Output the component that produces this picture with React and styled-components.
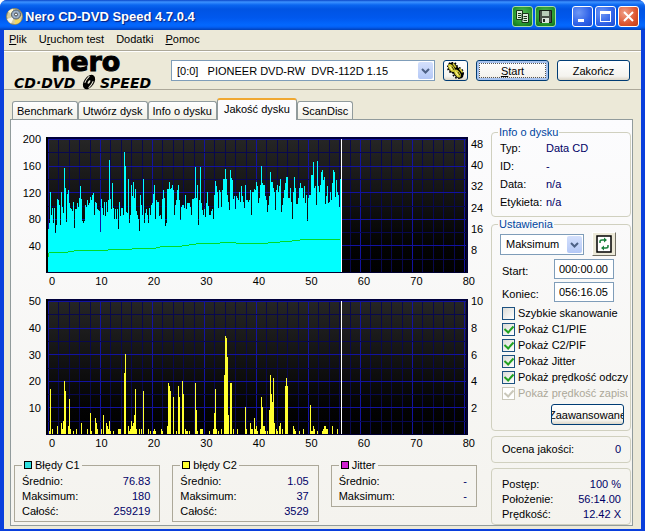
import React from "react";
import styled, { createGlobalStyle, css } from "styled-components";

const GlobalStyle = createGlobalStyle`
  * {
    box-sizing: border-box;
  }
  body {
    margin: 0;
    background: #fff;
    color: #000;
    font-family: "Liberation Sans", Arial, sans-serif;
    font-size: 11px;
    line-height: 12px;
  }
  button, input, select {
    font: inherit;
    color: inherit;
    margin: 0;
  }
  u {
    text-underline-offset: 1px;
  }
`;

const Window = styled.div`
  display: flex;
  flex-direction: column;
  min-height: 100vh;
  background: #0a3fdc;
  border-radius: 7px 7px 0 0;
  overflow: hidden;
`;

const TitleBar = styled.header`
  display: flex;
  align-items: center;
  gap: 2px;
  height: 30px;
  padding: 2px 6px 0 6px;
  background: linear-gradient(
    #0a46c8 0,
    #3c92ff 2px,
    #0a66f0 5px,
    #0054e3 9px,
    #0058ee 18px,
    #0368fe 25px,
    #0360f5 27px,
    #0140b8 30px
  );
`;

const Title = styled.h1`
  flex: 1;
  margin: 0;
  padding-top: 2px;
  color: #fff;
  font-size: 13px;
  font-weight: bold;
  text-shadow: 1px 1px 1px #0a1e78;
`;

const tones = {
  blue: "radial-gradient(circle at 30% 30%, #6f98f5, #2f62e8 60%, #1c4bd0)",
  red: "radial-gradient(circle at 30% 30%, #f0a088, #dd5530 60%, #c03c14)",
  green: "radial-gradient(circle at 50% 40%, #5cc05c, #24952c 65%, #107018)",
};

const TitleButton = styled.button`
  display: flex;
  align-items: center;
  justify-content: center;
  width: 21px;
  height: 21px;
  padding: 0;
  border: 1px solid ${props => (props.$tone === "green" ? "#a8dca8" : "#fff")};
  border-radius: 3px;
  background: ${props => tones[props.$tone]};
  margin-left: ${props => (props.$apart ? "14px" : "0")};
`;

const Body = styled.div`
  flex: 1;
  display: flex;
  flex-direction: column;
  margin: 0 4px 4px;
  background: #ece9d8;
`;

const MenuBar = styled.nav`
  display: flex;
  gap: 12px;
  height: 21px;
  padding: 3px 5px 0;
  border-bottom: 1px solid #aca899;
`;

const MenuLink = styled.a`
  color: #000;
  text-decoration: none;
`;

const Toolbar = styled.div`
  display: flex;
  align-items: center;
  gap: 8px;
  height: 39px;
  padding: 0 11px 0 9px;
  border-top: 1px solid #fff;
  border-bottom: 1px solid #aca899;
`;

const Logo = styled.svg`
  flex: none;
  width: 150px;
  height: 36px;
  overflow: visible;
`;

const ComboBox = styled.div`
  position: relative;
  flex: ${props => (props.$wide ? "1" : "none")};
  width: ${props => (props.$wide ? "auto" : "84px")};
  height: 21px;
`;

const Select = styled.select`
  appearance: none;
  width: 100%;
  height: 100%;
  padding: 0 20px 0 5px;
  border: 1px solid #7f9db9;
  border-radius: 0;
  background: #fff;
`;

const ComboArrow = styled.svg`
  position: absolute;
  top: 2px;
  right: 2px;
  width: 15px;
  height: 17px;
  border-radius: 2px;
  background: linear-gradient(#d4e0fc, #b4c8f6);
  pointer-events: none;
`;

const Button = styled.button`
  display: flex;
  align-items: center;
  justify-content: center;
  flex: none;
  width: ${props => (props.$icon ? "25px" : "73px")};
  height: 21px;
  padding: 0;
  overflow: hidden;
  border: 1px solid #003c74;
  border-radius: 3px;
  background: linear-gradient(#fff, #f4f3ee 80%, #dcd6c8);
  ${props =>
    props.$primary &&
    css`
      box-shadow: inset 0 0 0 2px #a6c2ee;
      outline: 1px dotted #555;
      outline-offset: -4px;
    `}
`;

const Tabs = styled.div`
  display: flex;
  align-items: flex-end;
  height: 29px;
  padding: 0 8px;
`;

const Tab = styled.button`
  height: ${props => (props.$active ? "22px" : "18px")};
  padding: 0 ${props => (props.$active ? "6px" : "4px")};
  border: 1px solid #919b9c;
  border-bottom: 0;
  border-radius: 3px 3px 0 0;
  background: linear-gradient(#fff, #f0efe6);
  ${props =>
    props.$active &&
    css`
      position: relative;
      margin-bottom: -1px;
      padding-bottom: 2px;
      border-top: 2px solid #f0a830;
      background: #fcfcfe;
    `}
`;

const Panel = styled.main`
  flex: 1;
  display: grid;
  grid-template-columns: 1fr 140px;
  gap: 5px;
  margin: 0 8px 3px 6px;
  padding-right: 1px;
  border: 1px solid #919b9c;
  background: linear-gradient(#fcfcfe, #f4f3ee);
`;

const Results = styled.section`
  display: flex;
  flex-direction: column;
  gap: 8px;
  min-width: 0;
  padding-top: 13px;
`;

const Sidebar = styled.aside`
  min-width: 0;
  padding-top: 6px;
`;

const Chart = styled.div`
  display: grid;
  grid-template-columns: 35px 1fr 18px;
`;

const Plot = styled.svg`
  display: block;
  width: 100%;
  height: 136px;
  margin-top: 4px;
`;

const Scale = styled.div`
  display: flex;
  flex-direction: column;
  justify-content: space-between;
  padding: ${props => (props.$inset ? "5px 0 17px 3px" : "0 0 21px 3px")};
  ${props =>
    props.$left &&
    css`
      padding: 0 5px 21px 0;
      text-align: right;
    `}
`;

const TimeScale = styled.div`
  grid-column: 2 / 4;
  display: flex;
  justify-content: space-between;
  padding: 2px 11px 0 3px;
`;

const Summaries = styled.div`
  display: grid;
  grid-template-columns: repeat(3, 1fr);
  align-items: start;
  gap: 12px;
  margin-top: 2px;
  padding: 0 9px 0 3px;
`;

const Summary = styled.fieldset`
  min-width: 0;
  margin: 0;
  padding: 3px 9px 2px 7px;
  border: 1px solid #aca899;
`;

const SummaryTitle = styled.legend`
  display: flex;
  align-items: center;
  gap: 3px;
  padding: 0 2px;
`;

const Swatch = styled.span`
  width: 8px;
  height: 8px;
  border: 1px solid #000;
  background: ${props => props.$color};
`;

const Facts = styled.dl`
  margin: 0;
`;

const Fact = styled.div`
  display: flex;
  justify-content: space-between;
  line-height: 15px;
`;

const Value = styled.dd`
  margin: 0;
  color: #000066;
`;

const Group = styled.fieldset`
  min-width: 0;
  margin: 0 0 1px;
  padding: 1px 2px 5px 8px;
  border: 1px solid #d0d0bf;
  border-radius: 4px;
`;

const GroupTitle = styled.legend`
  padding: 0 1px;
  margin-left: -2px;
  color: #0046a0;
`;

const InfoRow = styled.div`
  display: grid;
  grid-template-columns: 46px 1fr;
  line-height: 18px;
`;

const StatusBox = styled.div`
  margin-top: 5px;
  padding: ${props => (props.$tall ? "8px 9px 2px 10px" : "5px 9px 5px 10px")};
  border: 1px solid #d0d0bf;
  border-radius: 4px;
`;

const SpeedRow = styled.div`
  display: flex;
  align-items: center;
  gap: 8px;
  margin: 1px 0 3px;
`;

const RefreshButton = styled.button`
  width: 24px;
  height: 24px;
  padding: 0;
  border: 1px solid;
  border-color: #fff #716f64 #716f64 #fff;
  background: #ece9d8;
  svg {
    display: block;
    margin: auto;
  }
`;

const TimeRow = styled.div`
  display: grid;
  grid-template-columns: 52px 60px;
  align-items: center;
  margin-bottom: 3px;
  padding-left: 2px;
  label {
    padding-top: 3px;
  }
`;

const TimeInput = styled.input`
  width: 100%;
  height: 20px;
  padding: 0 4px;
  border: 1px solid #7f9db9;
  background: #fff;
`;

const CheckList = styled.div`
  overflow: hidden;
  margin-bottom: 3px;
  padding-left: 2px;
`;

const CheckLabel = styled.label`
  display: flex;
  align-items: center;
  gap: 3px;
  height: 16px;
  white-space: nowrap;
  color: ${props => (props.$disabled ? "#aca899" : "#000")};
`;

const CheckInput = styled.input`
  appearance: none;
  display: grid;
  place-items: center;
  flex: none;
  width: 13px;
  height: 13px;
  border: 1px solid #1c5180;
  background: linear-gradient(135deg, #dcdcd7, #fff);
  &:checked::after {
    content: "";
    width: 4px;
    height: 7px;
    margin-top: -2px;
    border: solid #21a121;
    border-width: 0 2px 2px 0;
    transform: rotate(42deg);
  }
  &:disabled {
    border-color: #cac8bb;
    background: #fff;
  }
  &:disabled::after {
    border-color: #cac8bb;
  }
`;

const ButtonRow = styled.div`
  display: flex;
  justify-content: flex-end;
  padding-right: 4px;
`;

// C1 errors, one sample per column
const c1 = [
  64, 73, 121, 85, 96, 73, 96, 59, 70, 110, 109, 100, 70, 120, 98, 88, 156, 126,
  75, 118, 123, 104, 96, 95, 91, 105, 66, 94, 95, 104, 98, 111, 129, 110, 77,
  74, 77, 101, 98, 109, 101, 104, 113, 109, 116, 119, 86, 105, 104, 95, 93, 91,
  60, 110, 96, 86, 106, 84, 106, 90, 109, 168, 110, 95, 134, 96, 79, 95, 80, 95,
  64, 106, 84, 96, 96, 86, 180, 159, 90, 88, 140, 74, 86, 131, 114, 135, 111,
  125, 91, 86, 79, 61, 116, 101, 86, 140, 73, 89, 94, 86, 73, 96, 86, 100, 104,
  118, 131, 79, 109, 106, 106, 84, 85, 79, 110, 123, 111, 69, 74, 125, 125, 135,
  125, 126, 131, 124, 86, 101, 109, 124, 131, 109, 78, 98, 100, 100, 96, 116,
  95, 104, 104, 104, 98, 86, 110, 110, 111, 158, 111, 131, 71, 109, 158, 104,
  93, 86, 94, 83, 104, 121, 99, 85, 85, 91, 94, 80, 116, 137, 129, 121, 96, 124,
  121, 98, 124, 140, 140, 155, 140, 116, 106, 93, 154, 141, 138, 110, 115, 94,
  115, 111, 109, 121, 105, 130, 114, 106, 96, 131, 109, 109, 105, 109, 124, 86,
  121, 121, 125, 123, 135, 129, 104, 111, 131, 159, 134, 131, 131, 114, 109, 90,
  100, 114, 151, 136, 136, 126, 121, 93, 124, 131, 121, 129, 140, 90, 101, 111,
  124, 134, 143, 143, 111, 111, 126, 106, 79, 121, 143, 126, 103, 103, 111, 126,
  134, 126, 126, 111, 129, 104, 116, 76, 111, 116, 116, 146, 146, 165, 126, 129,
  100, 167, 129, 121, 131, 151, 154, 139, 143, 103, 114, 129, 104, 106, 121,
  109, 134, 153, 151, 113, 139, 121, 116, 98, 140,
];

// C2 errors as [column, count], everything else is zero
const c2 = [
  [1, 1], [2, 17], [4, 2], [9, 3], [13, 4], [14, 2], [15, 5], [16, 20],
  [17, 16], [20, 3], [21, 13], [22, 2], [25, 1], [28, 2], [33, 4], [39, 2],
  [42, 8], [43, 1], [47, 6], [48, 4], [49, 2], [53, 2], [55, 7], [58, 4],
  [59, 3], [60, 2], [61, 5], [62, 1], [65, 1], [70, 2], [71, 2], [72, 2],
  [76, 23], [77, 30], [80, 3], [81, 1], [82, 2], [83, 5], [84, 3], [85, 4],
  [86, 7], [87, 17], [88, 2], [91, 2], [93, 2], [95, 16], [100, 2], [102, 1],
  [105, 1], [106, 2], [107, 1], [113, 2], [114, 1], [119, 3], [120, 19],
  [121, 18], [122, 16], [125, 14], [128, 1], [130, 18], [131, 14], [134, 20],
  [135, 15], [137, 2], [138, 1], [139, 1], [141, 1], [147, 19], [148, 9],
  [149, 1], [152, 2], [153, 2], [154, 2], [161, 1], [165, 2], [166, 8],
  [167, 17], [168, 2], [170, 1], [173, 2], [176, 22], [177, 37], [178, 36],
  [179, 29], [180, 7], [182, 19], [183, 19], [185, 2], [189, 2], [197, 10],
  [198, 2], [202, 4], [203, 2], [204, 2], [206, 6], [207, 2], [208, 3],
  [209, 1], [212, 2], [213, 14], [214, 10], [215, 3], [216, 3], [217, 1],
  [219, 1], [221, 9], [222, 22], [223, 15], [224, 12], [225, 21], [226, 4],
  [228, 2], [229, 1], [231, 3], [232, 4], [234, 2], [237, 18], [238, 21],
  [239, 18], [245, 3], [246, 2], [247, 1], [251, 1], [255, 2], [262, 11],
  [263, 1], [264, 1], [265, 3], [266, 2], [269, 1], [274, 1], [275, 2],
  [276, 3], [277, 3], [278, 2], [279, 2], [284, 3], [289, 2],
];

// read speed as [column, y] in the plot
const speed = [
  [0, 120], [1, 116], [8, 115], [20, 115], [32, 113], [60, 113], [64, 112],
  [84, 112], [88, 111], [108, 111], [116, 109], [134, 109], [148, 107],
  [158, 106], [172, 106], [182, 105], [194, 107], [204, 106], [220, 106],
  [232, 105], [244, 104], [252, 103], [262, 102], [276, 102], [292, 102],
];

const range = n => Array.from({ length: n }, (_, i) => i);

const PLOT_LEFT = 2;
const PLOT_TOP = 2;
const PLOT_HEIGHT = 133;
const DECADE = 52;

const PlotArea = ({ id, label, max, bars, color, line }) => {
  const bottom = PLOT_TOP + PLOT_HEIGHT;
  const path = bars
    .map(([x, v]) => {
      const h = Math.round((v / max) * PLOT_HEIGHT);
      return `M${PLOT_LEFT + x} ${bottom}v${-h}h1v${h}z`;
    })
    .join("");
  return (
    <Plot
      viewBox="0 0 422 136"
      preserveAspectRatio="none"
      shapeRendering="crispEdges"
      role="img"
      aria-label={label}
    >
      <defs>
        <linearGradient id={id} x1="0" y1="0" x2="0" y2="1">
          <stop offset="0" stopColor="#262626" />
          <stop offset="0.8" stopColor="#030303" />
          <stop offset="1" stopColor="#000" />
        </linearGradient>
      </defs>
      <rect width="422" height="136" fill={`url(#${id})`} />
      {range(41).map(i => (
        <rect
          key={i}
          x={PLOT_LEFT + Math.round((i * DECADE) / 5)}
          y="2"
          width="1"
          height="133"
          fill={i % 5 ? "#08084e" : "#1212a0"}
        />
      ))}
      {range(11).map(i => (
        <rect
          key={i}
          x="2"
          y={PLOT_TOP + Math.round((i * PLOT_HEIGHT) / 10)}
          width="418"
          height="1"
          fill={i % 2 ? "#08084e" : "#1212a0"}
        />
      ))}
      <rect width="422" height="2" fill="#00003c" />
      <rect width="2" height="136" fill="#000" />
      <rect x="420" width="2" height="136" fill="#000030" />
      <rect y="135" width="422" height="1" fill="#000030" />
      <path d={path} fill={color} />
      {line && (
        <polyline
          points={line.map(([x, y]) => `${PLOT_LEFT + x},${y}`).join(" ")}
          fill="none"
          stroke="#00dc28"
        />
      )}
      <rect x="295" y="2" width="1" height="133" fill="#fff" />
    </Plot>
  );
};

const ErrorChart = ({ left, right, inset, ...plot }) => (
  <Chart>
    <Scale $left>
      {left.map(n => (
        <span key={n}>{n}</span>
      ))}
    </Scale>
    <PlotArea {...plot} />
    <Scale $inset={inset}>
      {right.map(n => (
        <span key={n}>{n}</span>
      ))}
    </Scale>
    <TimeScale>
      {range(9).map(i => (
        <span key={i}>{i * 10}</span>
      ))}
    </TimeScale>
  </Chart>
);

const Combo = ({ wide, label, children }) => (
  <ComboBox $wide={wide}>
    <Select aria-label={label}>
      <option>{children}</option>
    </Select>
    <ComboArrow viewBox="0 0 15 17">
      <path d="M4 7l3.5 3.5L11 7" fill="none" stroke="#4d6185" strokeWidth="2" />
    </ComboArrow>
  </ComboBox>
);

const SummaryBox = ({ title, color, rows }) => (
  <Summary>
    <SummaryTitle>
      <Swatch $color={color} />
      {title}
    </SummaryTitle>
    <FactList rows={rows} />
  </Summary>
);

const FactList = ({ rows }) => (
  <Facts>
    {rows.map(([name, value]) => (
      <Fact key={name}>
        <dt>{name}</dt>
        <Value>{value}</Value>
      </Fact>
    ))}
  </Facts>
);

const Check = ({ children, checked, disabled }) => (
  <CheckLabel $disabled={disabled}>
    <CheckInput type="checkbox" defaultChecked={checked} disabled={disabled} />
    {children}
  </CheckLabel>
);

const DiscIcon = () => (
  <svg width="17" height="17" viewBox="0 0 17 17">
    <circle cx="8.5" cy="8.5" r="8" fill="#d8cfa0" stroke="#8a8258" />
    <path d="M8.5 8.5L2 3.5A8 8 0 0 1 7 .8z" fill="#fff8d0" />
    <path d="M8.5 8.5L15 13a8 8 0 0 1-6 3.2z" fill="#f4d860" />
    <path d="M8.5 8.5L1 11a8 8 0 0 0 4 4.500z" fill="#f6f6f0" />
    <circle cx="10" cy="6.500" r="4.500" fill="#9cb0c8" stroke="#4c5868" />
    <circle cx="10" cy="6.500" r="1.500" fill="#fff" stroke="#444" />
  </svg>
);

const NeroLogo = () => (
  <Logo viewBox="0 0 150 36" role="img" aria-label="Nero CD-DVD Speed">
    <g fontFamily="DejaVu Sans" fontWeight="bold">
      <text x="38" y="18" fontSize="27" stroke="#000" strokeWidth="1">
        nero
      </text>
      <g fontSize="14" fontStyle="italic">
        <text x="1" y="35">CD·DVD</text>
        <text x="87" y="35">SPEED</text>
      </g>
    </g>
    <g transform="rotate(35 76 29)">
      <ellipse cx="76" cy="29" rx="5" ry="8" />
      <ellipse cx="76" cy="29" rx="1" ry="2" fill="#ece9d8" />
      <path d="M73 24q-1 5 0 8M79 26q1 4 0 8" fill="none" stroke="#ece9d8" />
    </g>
  </Logo>
);

const GearsIcon = () => (
  <svg width="19" height="17" viewBox="0 0 19 17">
    <g fill="#000">
      <ellipse cx="7" cy="6" rx="4.500" ry="6" transform="rotate(-35 7 6)" />
      <ellipse cx="12.500" cy="11" rx="4.500" ry="6" transform="rotate(-35 12.500 11)" />
    </g>
    <g fill="none" stroke="#000" strokeWidth="2" strokeDasharray="1.500 1.500">
      <ellipse cx="6.500" cy="5.500" rx="4.500" ry="5" />
      <ellipse cx="12" cy="11" rx="5" ry="5" />
    </g>
    <g fill="#d6cc38">
      <ellipse cx="5.500" cy="6" rx="2.500" ry="4.500" transform="rotate(-35 5.500 6)" />
      <ellipse cx="11.500" cy="11.500" rx="2.500" ry="4.500" transform="rotate(-35 11.500 11.500)" />
      <path d="M7 1.500l3 4M13.500 6.500l3 4" stroke="#d6cc38" strokeWidth="1.500" />
    </g>
    <path d="M3.500 4l2.500 4M9.500 9.500l2.500 4" stroke="#fffcb0" />
    <path d="M6 4.500l2 3.500M12 10l2 3.500" stroke="#3c3800" />
  </svg>
);

const App = () => (
  <>
    <GlobalStyle />
    <Window>
      <TitleBar>
        <DiscIcon />
        <Title>Nero CD-DVD Speed 4.7.0.4</Title>
        <TitleButton $tone="green" aria-label="Kopiuj">
          <svg width="15" height="15" viewBox="0 0 15 15">
            <path d="M1.500 1.500h6v9h-6zM7 4.500h6.500v9H7z" fill="#dcecdc" stroke="#183818" />
            <path d="M3 4.500h3M3 6.500h3M3 8.500h3M8.500 7.500H12M8.500 9.500H12M8.500 11.500H12" stroke="#183818" />
          </svg>
        </TitleButton>
        <TitleButton $tone="green" aria-label="Zapisz">
          <svg width="15" height="15" viewBox="0 0 15 15">
            <path d="M1.500 1.500h12v12h-11l-1-1z" fill="#485048" stroke="#182018" />
            <path d="M4 2h7v5H4z" fill="#b8ccb8" />
            <path d="M4 9h7v5H4z" fill="#dce4dc" />
            <path d="M5 10h2v3H5z" fill="#202820" />
          </svg>
        </TitleButton>
        <TitleButton $tone="blue" $apart aria-label="Minimalizuj">
          <svg width="13" height="13" viewBox="0 0 13 13">
            <path d="M2 9h6v3H2z" fill="#fff" />
          </svg>
        </TitleButton>
        <TitleButton $tone="blue" aria-label="Maksymalizuj">
          <svg width="13" height="13" viewBox="0 0 13 13">
            <path d="M1 1h11v11H1zM2 4v7h9V4z" fill="#fff" fillRule="evenodd" />
          </svg>
        </TitleButton>
        <TitleButton $tone="red" aria-label="Zamknij">
          <svg width="13" height="13" viewBox="0 0 13 13">
            <path d="M2 2l9 9M11 2l-9 9" stroke="#fff" strokeWidth="2" />
          </svg>
        </TitleButton>
      </TitleBar>

      <Body>
        <MenuBar>
          <MenuLink href="#plik"><u>P</u>lik</MenuLink>
          <MenuLink href="#test">U<u>r</u>uchom test</MenuLink>
          <MenuLink href="#dodatki">Dodatki</MenuLink>
          <MenuLink href="#pomoc"><u>P</u>omoc</MenuLink>
        </MenuBar>

        <Toolbar>
          <NeroLogo />
          <Combo wide label="Napęd">
            {"[0:0]\u00a0\u00a0\u00a0PIONEER DVD-RW\u00a0\u00a0DVR-112D 1.15"}
          </Combo>
          <Button $icon aria-label="Opcje">
            <GearsIcon />
          </Button>
          <Button $primary>
            <span><u>S</u>tart</span>
          </Button>
          <Button>Zakończ</Button>
        </Toolbar>

        <Tabs role="tablist">
          <Tab role="tab">Benchmark</Tab>
          <Tab role="tab">Utwórz dysk</Tab>
          <Tab role="tab">Info o dysku</Tab>
          <Tab role="tab" $active aria-selected="true">Jakość dysku</Tab>
          <Tab role="tab">ScanDisc</Tab>
        </Tabs>

        <Panel>
          <Results>
            <ErrorChart
              id="c1-back"
              label="Błędy C1"
              left={[200, 160, 120, 80, 40]}
              right={[48, 40, 32, 24, 16, 8]}
              inset
              max={200}
              bars={c1.slice(0, 293).map((v, i) => [i, v])}
              color="#00ffff"
              line={speed}
            />
            <ErrorChart
              id="c2-back"
              label="Błędy C2"
              left={[50, 40, 30, 20, 10]}
              right={[10, 8, 6, 4, 2]}
              max={50}
              bars={c2}
              color="#ffff30"
            />
            <Summaries>
              <SummaryBox
                title="Błędy C1"
                color="#30e0e0"
                rows={[["Średnio:", "76.83"], ["Maksimum:", "180"], ["Całość:", "259219"]]}
              />
              <SummaryBox
                title="błędy C2"
                color="#ffff30"
                rows={[["Średnio:", "1.05"], ["Maksimum:", "37"], ["Całość:", "3529"]]}
              />
              <SummaryBox
                title="Jitter"
                color="#d020d0"
                rows={[["Średnio:", "-"], ["Maksimum:", "-"]]}
              />
            </Summaries>
          </Results>

          <Sidebar>
            <Group>
              <GroupTitle>Info o dysku</GroupTitle>
              <Facts>
                {[["Typ:", "Data CD"], ["ID:", "-"], ["Data:", "n/a"], ["Etykieta:", "n/a"]].map(
                  ([name, value]) => (
                    <InfoRow key={name}>
                      <dt>{name}</dt>
                      <Value>{value}</Value>
                    </InfoRow>
                  )
                )}
              </Facts>
            </Group>

            <Group>
              <GroupTitle>Ustawienia</GroupTitle>
              <SpeedRow>
                <Combo label="Prędkość">Maksimum</Combo>
                <RefreshButton aria-label="Odśwież">
                  <svg width="16" height="18" viewBox="0 0 16 18">
                    <path d="M1 1h14v16H1z" fill="#fff" stroke="#000" strokeWidth="1.500" />
                    <path d="M4 8V6.500Q4 5 6 5h2M12 10v1.500q0 1.500-2 1.500H8" fill="none" stroke="#18803c" strokeWidth="1.500" />
                    <path d="M8 2.500L11 5 8 7.500zM8 10.500L5 13l3 2.500z" fill="#18803c" />
                  </svg>
                </RefreshButton>
              </SpeedRow>
              <TimeRow>
                <label htmlFor="start">Start:</label>
                <TimeInput id="start" defaultValue="000:00.00" />
              </TimeRow>
              <TimeRow>
                <label htmlFor="end">Koniec:</label>
                <TimeInput id="end" defaultValue="056:16.05" />
              </TimeRow>
              <CheckList>
                <Check>Szybkie skanowanie</Check>
                <Check checked>Pokaż C1/PIE</Check>
                <Check checked>Pokaż C2/PIF</Check>
                <Check checked>Pokaż Jitter</Check>
                <Check checked>Pokaż prędkość odczytu</Check>
                <Check checked disabled>Pokaż prędkość zapisu</Check>
              </CheckList>
              <ButtonRow>
                <Button>Zaawansowane</Button>
              </ButtonRow>
            </Group>

            <StatusBox>
              <FactList rows={[["Ocena jakości:", "0"]]} />
            </StatusBox>
            <StatusBox $tall>
              <FactList
                rows={[["Postęp:", "100 %"], ["Położenie:", "56:14.00"], ["Prędkość:", "12.42 X"]]}
              />
            </StatusBox>
          </Sidebar>
        </Panel>
      </Body>
    </Window>
  </>
);

export default App;
